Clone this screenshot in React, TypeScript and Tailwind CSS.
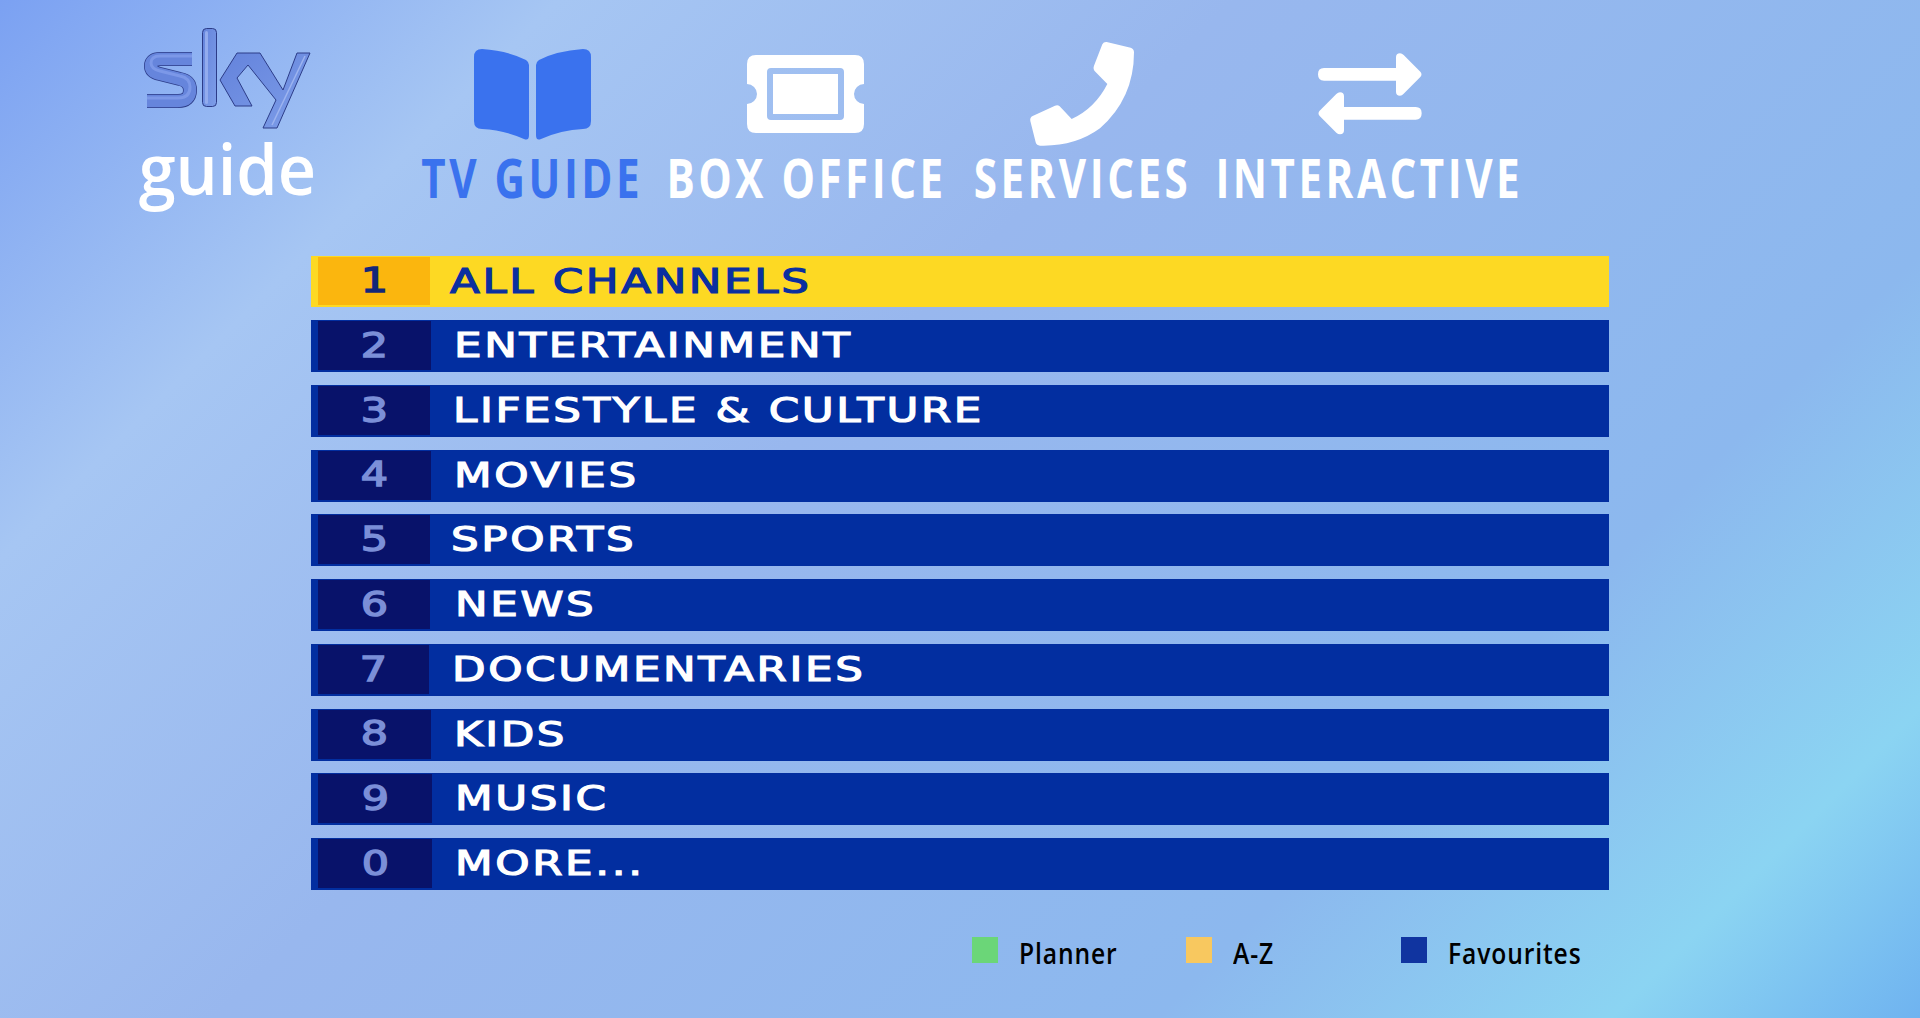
const channels = [
  { key: "1", label: "ALL CHANNELS", cell: "w-[112px]", text: "pl-[20px]" },
  { key: "2", label: "ENTERTAINMENT", cell: "w-[113px]", text: "pl-[23px]" },
  { key: "3", label: "LIFESTYLE & CULTURE", cell: "w-[112px]", text: "pl-[23px]" },
  { key: "4", label: "MOVIES", cell: "w-[113px]", text: "pl-[23px]" },
  { key: "5", label: "SPORTS", cell: "w-[112px]", text: "pl-[21px]" },
  { key: "6", label: "NEWS", cell: "w-[112px]", text: "pl-[25px]" },
  { key: "7", label: "DOCUMENTARIES", cell: "w-[111px]", text: "pl-[23px]" },
  { key: "8", label: "KIDS", cell: "w-[113px]", text: "pl-[23px]" },
  { key: "9", label: "MUSIC", cell: "w-[114px]", text: "pl-[23px]" },
  { key: "0", label: "MORE...", cell: "w-[114px]", text: "pl-[23px]" },
];

const legend = [
  { label: "Planner", swatch: "bg-[#6bd678]", width: "w-[214px]" },
  { label: "A-Z", swatch: "bg-[#f8c85f]", width: "w-[215px]" },
  { label: "Favourites", swatch: "bg-[#1034a0]", width: "w-auto" },
];

function SkyLogo() {
  const s = "M192 59 H160 Q151 59 151 66 Q151 72 160 74 L180 79 Q190 81 190 90 Q190 101 178 101 H147";
  const ky = "237,53 260,53 283,90 297,53 310,53 277,128 263,128 276,100 248,65 237,78 252,106 235,106 220,80";
  return (
    <svg width="175" height="110" viewBox="140 25 175 110">
      <defs>
        <linearGradient id="skyFill" x1="0" y1="0" x2="1" y2="1">
          <stop offset="0" stopColor="#6483dc" />
          <stop offset="1" stopColor="#7d9de8" />
        </linearGradient>
      </defs>
      <path d={s} fill="none" stroke="#2c3c88" strokeWidth="14" strokeLinejoin="round" />
      <path d={s} fill="none" stroke="#6685dc" strokeWidth="12.5" strokeLinejoin="round" />
      <path d={s} fill="none" stroke="#7c98e8" strokeWidth="3" transform="translate(0 -3)" />
      <rect x="202.5" y="28.5" width="14" height="78" rx="4" fill="url(#skyFill)" stroke="#2c3c88" />
      <rect x="205" y="31" width="3" height="73" rx="1.5" fill="#93acee" />
      <polygon points={ky} fill="url(#skyFill)" stroke="#2c3c88" strokeLinejoin="round" />
      <path d="M305 56 L272 125" stroke="#9db4f0" strokeWidth="1.5" fill="none" />
    </svg>
  );
}

function BookIcon() {
  return (
    <svg width="117" height="91" viewBox="0 0 117 91" fill="#3a72ee">
      <path d="M8 0 Q35 2 52 11 Q55 13 55 16 V86 Q55 92 50 90 Q30 81 8 80 Q0 80 0 72 V8 Q0 0 8 0Z" />
      <path d="M109 0 Q82 2 65 11 Q62 13 62 16 V86 Q62 92 67 90 Q87 81 109 80 Q117 80 117 72 V8 Q117 0 109 0Z" />
    </svg>
  );
}

function TicketIcon() {
  return (
    <svg width="117" height="78" viewBox="0 0 117 78" fill="#ffffff" fillRule="evenodd">
      <path d="M9 0 H108 Q117 0 117 9 V29 A10 10 0 0 0 117 49 V69 Q117 78 108 78 H9 Q0 78 0 69 V49 A10 10 0 0 0 0 29 V9 Q0 0 9 0Z M24 13 Q20 13 20 17 V61 Q20 65 24 65 H93 Q97 65 97 61 V17 Q97 13 93 13Z" />
      <rect x="26" y="19" width="65" height="40" />
    </svg>
  );
}

function PhoneIcon() {
  return (
    <svg width="125" height="120" viewBox="0 0 375 360" fill="#ffffff">
      <path d="M247 28 Q251 20 260 21 L332 38 Q342 41 342 52 Q342 190 240 280 Q165 335 60 332 Q50 332 47 322 L31 258 Q29 247 38 243 L105 212 Q113 208 119 214 L155 252 Q225 220 262 147 L226 110 Q218 102 222 92Z" />
    </svg>
  );
}

function ArrowsIcon() {
  return (
    <svg width="120" height="100" viewBox="0 0 360 300" fill="#ffffff">
      <path d="M42 69 H258 V37 Q258 25 270 25 Q276 25 281 30 L331 80 Q338 88 331 96 L281 146 Q276 152 270 152 Q258 152 258 140 V107 H42 Q24 107 24 88 Q24 69 42 69Z" />
      <path d="M317 186 H102 V154 Q102 142 90 142 Q84 142 79 147 L29 197 Q22 205 29 213 L79 263 Q84 268 90 268 Q102 268 102 256 V224 H317 Q335 224 335 205 Q335 186 317 186Z" />
    </svg>
  );
}

const tabs = [
  { label: "TV GUIDE", icon: <BookIcon />, width: "w-[218px]", color: "text-[#3a72ee]", box: "pt-[49px]" },
  { label: "BOX OFFICE", icon: <TicketIcon />, width: "ml-[26px] w-[280px]", color: "text-white", box: "pr-[3px] pt-[55px]" },
  { label: "SERVICES", icon: <PhoneIcon />, width: "ml-[23px] w-[224px]", color: "text-white", box: "pt-[35px]" },
  { label: "INTERACTIVE", icon: <ArrowsIcon />, width: "ml-[24px] w-[303px]", color: "text-white", box: "pt-[45px]" },
];

export default function App() {
  return (
    <div className="h-[1018px] w-[1920px] overflow-hidden bg-[linear-gradient(135deg,#7ba1f2_0%,#a6c6f3_19%,#98b7ee_42%,#8cb8ee_74%,#8bd4f2_89.5%,#6fb3f0_100%)] font-['Open_Sans',sans-serif]">
      <header className="flex h-[256px] items-start pl-[137px]">
        <div className="w-[286px]">
          <div className="pl-[3px] pt-[25px]">
            <SkyLogo />
          </div>
          <div className="-ml-[3px] -mt-[3px] text-[70px] leading-[72px] font-semibold text-white">
            <span className="inline-block scale-x-[0.95]">guide</span>
          </div>
        </div>
        <nav className="flex">
          {tabs.map((tab) => (
            <div key={tab.label} className={`flex flex-col items-center ${tab.width}`}>
              <div className={`flex h-[147px] justify-center ${tab.box}`}>{tab.icon}</div>
              <div className={`whitespace-nowrap text-[54px] leading-[60px] font-bold tracking-[4.5px] ${tab.color}`}>
                <span className="inline-block scale-x-[0.78]">{tab.label}</span>
              </div>
            </div>
          ))}
        </nav>
      </header>

      <main className="ml-[311px] flex w-[1298px] flex-col gap-[12.75px]">
        {channels.map((channel, i) => {
          const active = i === 0;
          return (
            <div
              key={channel.key}
              className={`flex items-center pl-[7px] ${active ? "h-[51.25px] bg-[#fdd923] text-[#0a2fa0]" : "h-[52px] bg-[#022ea0] text-white"}`}
            >
              <div
                className={`mb-[1px] flex h-[calc(100%-3px)] items-center justify-center font-['DejaVu_Sans',sans-serif] text-[33px] [-webkit-text-stroke:1.4px_currentColor] ${channel.cell} ${active ? "bg-[#fbb60e] text-[#13277a]" : "bg-[#08126a] text-[#7b8fd8]"}`}
              >
                <span className="inline-block scale-x-[1.3]">{channel.key}</span>
              </div>
              <div className={channel.text}>
                <span className="inline-block origin-left scale-x-[1.32] whitespace-nowrap font-['DejaVu_Sans',sans-serif] text-[33px] leading-none tracking-[2px] [-webkit-text-stroke:1.2px_currentColor]">
                  {channel.label}
                </span>
              </div>
            </div>
          );
        })}
      </main>

      <footer className="ml-[972px] mt-[47px] flex">
        {legend.map((item) => (
          <div key={item.label} className={`flex items-start ${item.width}`}>
            <div className={`h-[26px] w-[26px] ${item.swatch}`} />
            <div className="ml-[21px] text-[28px] leading-[32px] font-semibold text-black">
              <span className="inline-block origin-left scale-x-[0.88] whitespace-nowrap tracking-[1px]">{item.label}</span>
            </div>
          </div>
        ))}
      </footer>
    </div>
  );
}
